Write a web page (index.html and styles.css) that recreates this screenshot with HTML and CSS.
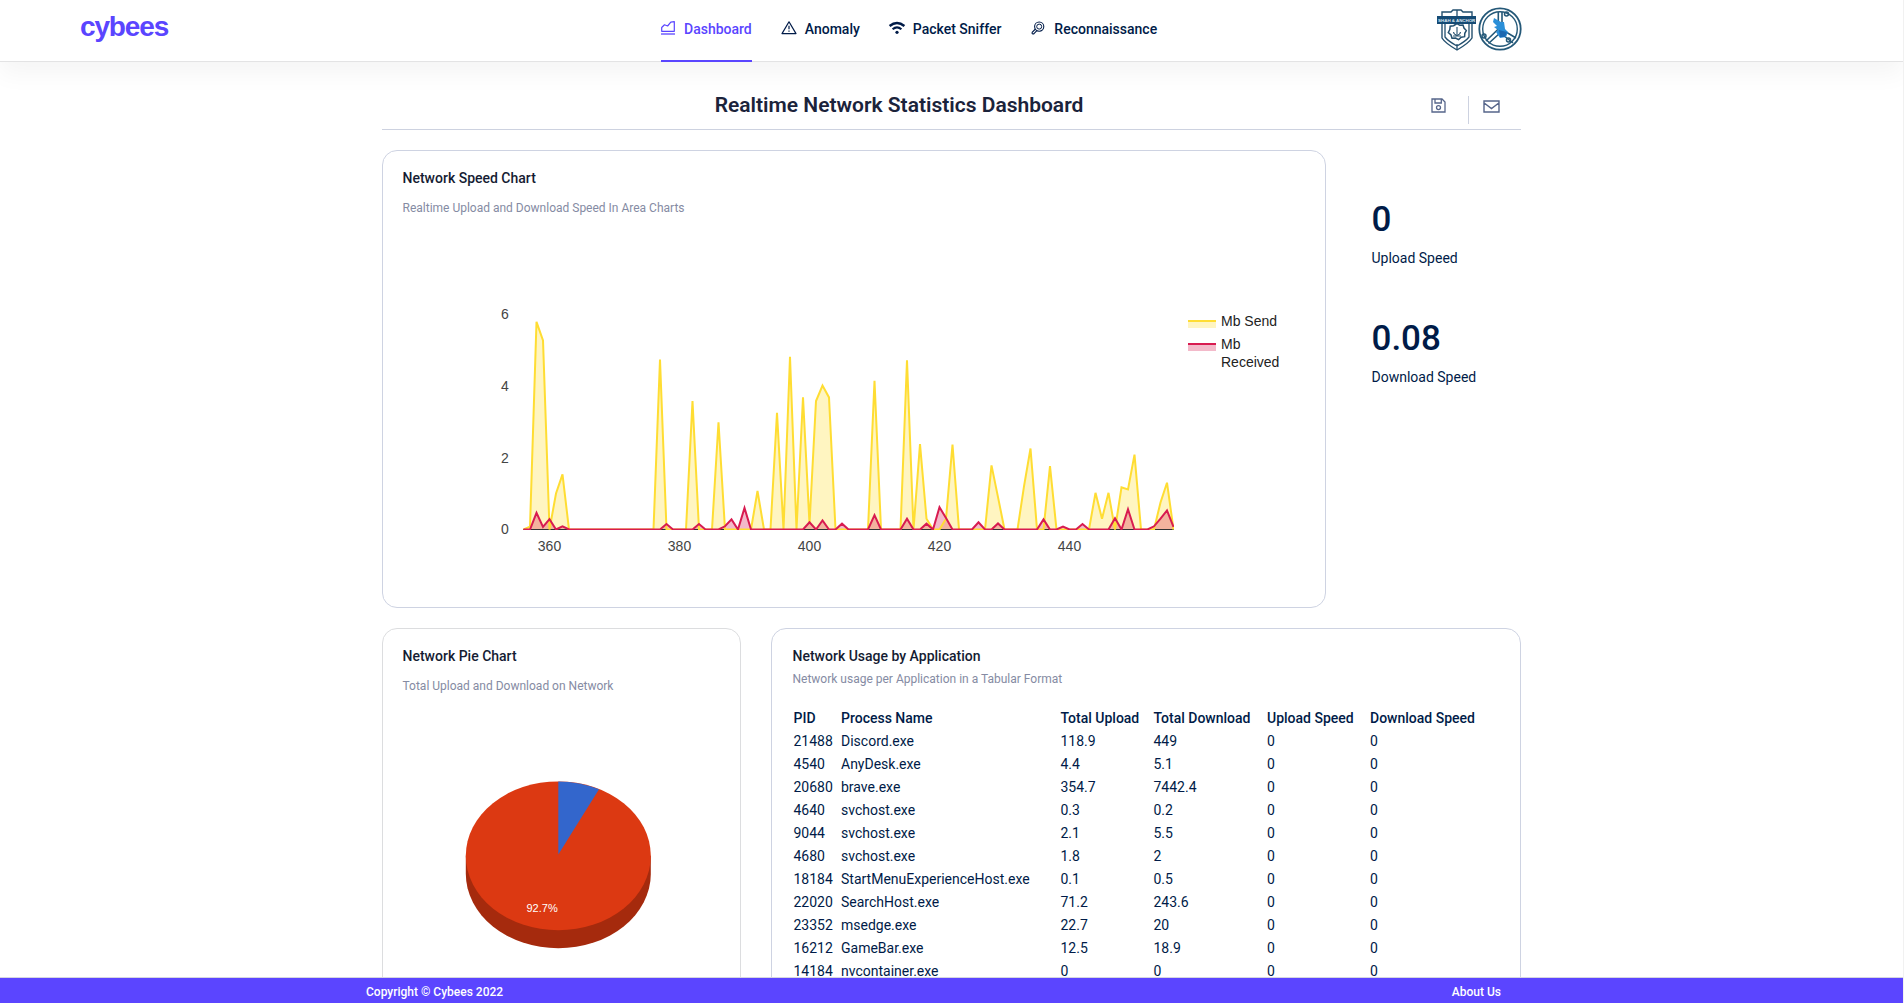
FILE: index.html
```html
<!DOCTYPE html>
<html lang="en">
<head>
<meta charset="utf-8">
<title>Cybees</title>
<link rel="stylesheet" href="styles.css">
</head>
<body>
<header class="topbar">
  <div class="brand">cybees</div>
  <nav class="nav">
    <a class="nav-item active"><svg class="ico" viewBox="0 0 14 14" fill="none" stroke="currentColor"><path d="M.7 10.3V6.5L3.5 3.8 6.6 5 9.8 1.2 13.3.7V10.3Z" stroke-width="1.2" stroke-linejoin="round"/><path d="M0 13H14" stroke-width="1.3"/></svg>Dashboard</a>
    <a class="nav-item"><svg class="ico" viewBox="0 0 14 14" fill="none" stroke="currentColor"><path d="M7 .8 14 12.6H0Z" stroke-width="1.2" stroke-linejoin="round"/><path d="M7 4.8V8.3M7 9.4V10.8" stroke-width="1.2"/></svg>Anomaly</a>
    <a class="nav-item"><svg class="ico" viewBox="0 0 14 14" fill="none" stroke="currentColor"><path d="M-.4 5Q7-1.2 14.4 5" stroke-width="2.4"/><path d="M2.6 8.3Q7 4.4 11.4 8.3" stroke-width="2.1"/><circle cx="7" cy="11.3" r="1.6" fill="currentColor" stroke="none"/></svg>Packet Sniffer</a>
    <a class="nav-item"><svg class="ico" viewBox="0 0 14 14" fill="none" stroke="currentColor"><circle cx="8.2" cy="5.6" r="4.6" stroke-width="1.1"/><circle cx="8.2" cy="5.6" r="2.5" stroke-width="1"/><path d="M4.4 8 1.2 11.4Q.7 12.8 2 13 2.8 13 3.2 12.4L5.9 9.6" stroke-width="1.1"/></svg>Reconnaissance</a>
  </nav>
  <div class="crests">
    <svg class="crest-shield" viewBox="0 0 40 44" fill="none" stroke="#24506f">
      <path d="M5 9V5H14L16 3H24L26 5H35V31Q32 36 20 43 8 36 5 31Z" stroke-width="1.4"/>
      <path d="M8 14V30Q11 34 20 39 29 34 32 30V14M20 3V10M20 37V42" stroke-width="1.3"/>
      <path d="M20 16.5 22.8 18.3 26 18 27 21 29.3 23.5 27.8 26.3 27.6 29.7 24.2 30.2 21.6 32.6 18.5 31 15 31.2 14 28 11.3 25.5 12.8 22.5 13.2 19.2 16.6 18.7Z" stroke-width="1.5"/>
      <path d="M20 20V27M16.5 25Q17 28 20 28 23 28 23.5 25M16 29H24" stroke-width="1.1"/>
      <path d="M0 9H39V17H0Z" fill="#154b75" stroke="none"/>
      <text class="crest-text" x="19.7" y="14.7" text-anchor="middle">SHAH &amp; ANCHOR</text>
    </svg>
    <svg class="crest-round" viewBox="0 0 44 44" fill="none" stroke="#245878">
      <circle cx="22" cy="22" r="20.7" stroke-width="1.8"/>
      <circle cx="22" cy="22" r="17.3" stroke-width="1.4"/>
      <path d="M20.3 5V22L8 34M24 5V22M22 26 10.5 36.5M25 28 35 36M28 25 38 31" stroke-width="1.6"/>
      <circle cx="28.5" cy="7" r="2" stroke-width="1.5"/><circle cx="6" cy="29" r="2" stroke-width="1.5"/><circle cx="30.5" cy="33" r="2" stroke-width="1.5"/>
      <path d="M16 11 23 15 26 15 27 22 30 25 28 30 22 31 18 25 20 23 16 20 19 19 15 15Z" fill="#2b8fd8" stroke="none"/>
      <path d="M21 23 29 25 27 30 22 30Z" fill="#1c68b0" stroke="none"/>
    </svg>
  </div>
</header>

<main class="page">
  <div class="page-head">
    <h1 class="page-title">Realtime Network Statistics Dashboard</h1>
    <div class="actions">
      <svg class="act-save" viewBox="0 0 15 15" fill="none" stroke="currentColor" stroke-width="1.3"><path d="M1 1H11L14 4V14H1ZM4 1V5H10.3V1"/><circle cx="7.5" cy="9.6" r="2"/></svg>
      <span class="divider"></span>
      <svg class="act-mail" viewBox="0 0 17 13" fill="none" stroke="currentColor" stroke-width="1.4"><path d="M1 1H16V12H1ZM1.2 3 8.5 8.6 15.8 3"/></svg>
    </div>
  </div>

  <section class="row-top">
    <article class="card speed-card">
      <h2 class="card-title">Network Speed Chart</h2>
      <p class="card-sub">Realtime Upload and Download Speed In Area Charts</p>
      <svg class="speed-chart" width="901" height="360" viewBox="403 230 901 360">
        <defs><clipPath id="plot"><rect x="523" y="300" width="651" height="230"/></clipPath></defs>
        <g id="series" clip-path="url(#plot)"></g>
        <g class="axis-text" text-anchor="middle">
          <text x="505" y="319">6</text><text x="505" y="391">4</text><text x="505" y="463">2</text><text x="505" y="534">0</text>
          <text x="549.5" y="551">360</text><text x="679.5" y="551">380</text><text x="809.5" y="551">400</text><text x="939.5" y="551">420</text><text x="1069.5" y="551">440</text>
        </g>
        <path d="M1188 320h28v8h-28z" fill="#ffdd33" fill-opacity=".3"/><path d="M1188 321h28" stroke="#ffdd33" stroke-width="2"/>
        <path d="M1188 343h28v8h-28z" fill="#d81b50" fill-opacity=".3"/><path d="M1188 344h28" stroke="#d81b50" stroke-width="2"/>
        <g class="legend-text"><text x="1221" y="326">Mb Send</text><text x="1221" y="349">Mb</text><text x="1221" y="367">Received</text></g>
      </svg>
    </article>
    <aside class="stats">
      <div class="stat"><div class="stat-value">0</div><div class="stat-label">Upload Speed</div></div>
      <div class="stat"><div class="stat-value">0.08</div><div class="stat-label">Download Speed</div></div>
    </aside>
  </section>

  <section class="row-bottom">
    <article class="card pie-card">
      <h2 class="card-title">Network Pie Chart</h2>
      <p class="card-sub">Total Upload and Download on Network</p>
      <svg class="pie" width="186" height="168" viewBox="465 781 186 168">
        <path d="M465.8 855.8V873.8A92.5 74.4 0 0 0 650.8 873.8V855.8Z" fill="#a52a0d"/>
        <ellipse cx="558.3" cy="855.8" rx="92.5" ry="74.4" fill="#dc3912"/>
        <path d="M558.3 854.5V781.4A92.5 74.4 0 0 1 599 789.2Z" fill="#3366cc"/>
        <text class="pie-text" x="526.5" y="912">92.7%</text>
      </svg>
    </article>
    <article class="card table-card">
      <h2 class="card-title">Network Usage by Application</h2>
      <p class="card-sub">Network usage per Application in a Tabular Format</p>
      <table class="usage">
        <thead><tr><th class="c-pid">PID</th><th class="c-name">Process Name</th><th class="c-tu">Total Upload</th><th class="c-td">Total Download</th><th class="c-us">Upload Speed</th><th>Download Speed</th></tr></thead>
        <tbody>
          <tr><td>21488</td><td>Discord.exe</td><td>118.9</td><td>449</td><td>0</td><td>0</td></tr>
          <tr><td>4540</td><td>AnyDesk.exe</td><td>4.4</td><td>5.1</td><td>0</td><td>0</td></tr>
          <tr><td>20680</td><td>brave.exe</td><td>354.7</td><td>7442.4</td><td>0</td><td>0</td></tr>
          <tr><td>4640</td><td>svchost.exe</td><td>0.3</td><td>0.2</td><td>0</td><td>0</td></tr>
          <tr><td>9044</td><td>svchost.exe</td><td>2.1</td><td>5.5</td><td>0</td><td>0</td></tr>
          <tr><td>4680</td><td>svchost.exe</td><td>1.8</td><td>2</td><td>0</td><td>0</td></tr>
          <tr><td>18184</td><td>StartMenuExperienceHost.exe</td><td>0.1</td><td>0.5</td><td>0</td><td>0</td></tr>
          <tr><td>22020</td><td>SearchHost.exe</td><td>71.2</td><td>243.6</td><td>0</td><td>0</td></tr>
          <tr><td>23352</td><td>msedge.exe</td><td>22.7</td><td>20</td><td>0</td><td>0</td></tr>
          <tr><td>16212</td><td>GameBar.exe</td><td>12.5</td><td>18.9</td><td>0</td><td>0</td></tr>
          <tr><td>14184</td><td>nvcontainer.exe</td><td>0</td><td>0</td><td>0</td><td>0</td></tr>
        </tbody>
      </table>
    </article>
  </section>
</main>

<footer class="footer"><span>Copyright © Cybees 2022</span><span>About Us</span></footer>
<script src="chart.js"></script>
</body>
</html>
```
FILE: styles.css
```css
* { box-sizing: border-box; }
body {
  margin: 0;
  height: 1003px;
  overflow: hidden;
  display: flex;
  flex-direction: column;
  background: #fff;
  border-right: 1px solid #f1f1f1;
  color: #001b48;
  font: 14px/20px Roboto, sans-serif;
}
h1, h2, p { margin: 0; }

.topbar {
  flex: none;
  height: 62px;
  display: grid;
  grid-template-columns: 581px 1fr 466px;
  padding-left: 80px;
  border-bottom: 1px solid #e3e3e4;
  box-shadow: 0 12px 24px rgba(0, 0, 0, .045);
}
.brand {
  color: #5a45ff;
  font: bold 28px/54px "Liberation Sans", sans-serif;
  letter-spacing: -1.15px;
}
.nav { display: flex; gap: 30px; }
.nav-item {
  display: flex;
  flex: none;
  height: 62px;
  gap: 9px;
  padding-top: 19px;
  font-weight: 500;
  white-space: nowrap;
}
.nav-item.active { color: #5a45ff; border-bottom: 2px solid #5a45ff; }
.ico { width: 14px; height: 14px; margin-top: 2px; overflow: visible; }
.crests { display: flex; gap: 1px; padding-top: 7px; }
.crest-shield { width: 40px; height: 44px; }
.crest-round { width: 44px; height: 44px; }
.crest-text { font: bold 4.4px "Liberation Sans", sans-serif; fill: #dfeaf2; stroke: none; }

.page { flex: 1; min-height: 0; width: 1139px; margin-left: 382px; overflow: hidden; }
.page-head {
  display: grid;
  grid-template-columns: 1fr auto;
  height: 68px;
  border-bottom: 1px solid #cdd2e0;
}
.page-title {
  grid-area: 1 / 1 / 2 / 3;
  padding: 31px 105px 0 0;
  font-size: 21px;
  line-height: 24px;
  font-weight: 600;
  text-align: center;
  color: #1b233b;
}
.actions { grid-area: 1 / 2; display: flex; padding: 34px 21px 0 0; color: #56658a; }
.act-save { width: 15px; height: 15px; margin-top: 2px; }
.act-mail { width: 17px; height: 13px; margin-top: 4px; }
.divider { width: 1px; height: 28px; margin: 0 14px 0 22px; background: #cdd2e0; }

.card { border: 1px solid #ced3e2; border-radius: 15px; padding: 17px 20px 17px 19.5px; }
.card-title { font-size: 14px; line-height: 20px; font-weight: 500; color: #151c33; }
.card-sub { margin-top: 10px; font-size: 12px; line-height: 20px; color: #858ba3; }

.row-top { display: flex; gap: 45.5px; margin-top: 20px; }
.speed-card { width: 944px; height: 458px; }
.speed-chart { display: block; margin: 12px 0 0 .5px; }
.axis-text, .legend-text { font: 14px "Liberation Sans", sans-serif; }
.axis-text { fill: #444; }
.legend-text { fill: #222; }
.stats { display: flex; flex-direction: column; padding-top: 49px; gap: 44px; }
.stat { height: 75px; }
.stat-value { font-size: 35px; line-height: 42px; font-weight: 500; }
.stat-label { margin-top: 7px; }

.row-bottom { display: flex; gap: 30px; margin-top: 20px; }
.pie-card { width: 359px; height: 458px; border-color: #dcdddf; }
.pie { display: block; margin: 85px 0 0 62.5px; }
.pie-text { font: 11px "Liberation Sans", sans-serif; fill: #fff; }
.table-card { width: 750px; height: 458px; padding-left: 20.5px; }
.table-card .card-sub { margin-top: 3px; }
.usage { margin: 17px 0 0 1px; border-collapse: collapse; table-layout: fixed; width: 700px; }
.usage th, .usage td { padding: 0; height: 23px; text-align: left; white-space: nowrap; }
.usage th { font-weight: 500; }
.c-pid { width: 47.5px; }
.c-name { width: 219.5px; }
.c-tu { width: 93px; }
.c-td { width: 113.5px; }
.c-us { width: 103px; }

.footer {
  flex: none;
  display: flex;
  justify-content: space-between;
  height: 26px;
  padding: 2px 402px 0 366px;
  border-top: 1px solid #d5d5e0;
  background: #5b45ff;
  color: #fff;
  font-size: 12px;
  line-height: 24px;
  font-weight: 500;
}
```
FILE: chart.js
```js
// Non-zero samples, keyed by tick; every other tick is zero.
const send = {357:.08,358:5.77,359:5.25,361:1,362:1.53,377:4.72,382:3.57,386:2.98,392:1.07,395:3.24,397:4.8,399:3.67,400:.15,401:3.57,402:4,403:3.67,410:4.13,415:4.7,417:2.37,418:.3,421:.3,422:2.36,428:1.78,429:.9,433:1.2,434:2.25,437:1.76,444:1.02,445:.3,446:1.02,448:1.17,449:1.11,450:2.08,454:.75,455:1.3};
const received = {358:.46,359:.07,360:.29,362:.09,378:.15,383:.15,387:.09,388:.28,390:.6,400:.2,402:.25,405:.16,410:.4,415:.3,418:.16,420:.62,421:.32,426:.2,429:.17,436:.28,439:.08,442:.15,447:.31,449:.56,453:.09,454:.3,455:.53,456:.07};
const points = data => {
  const out = [];
  for (let t = 356; t <= 456; t++) {
    out.push((523.5 + (t - 356) * 6.5) + ',' + (529.5 - (data[t] || 0) * 36).toFixed(1));
  }
  return out.join(' ');
};
const area = (data, color) => `<polygon points="523.5,529.5 ${points(data)} 1173.5,529.5" fill="${color}" fill-opacity=".3"/>`;
const line = (data, color) => `<polyline points="${points(data)}" fill="none" stroke="${color}" stroke-width="2"/>`;
document.getElementById('series').innerHTML =
  area(send, '#ffdd33') + area(received, '#d81b50') +
  '<path d="M523 529.5H1174" stroke="#333"/>' +
  line(send, '#ffdd33') + line(received, '#d81b50');
```
